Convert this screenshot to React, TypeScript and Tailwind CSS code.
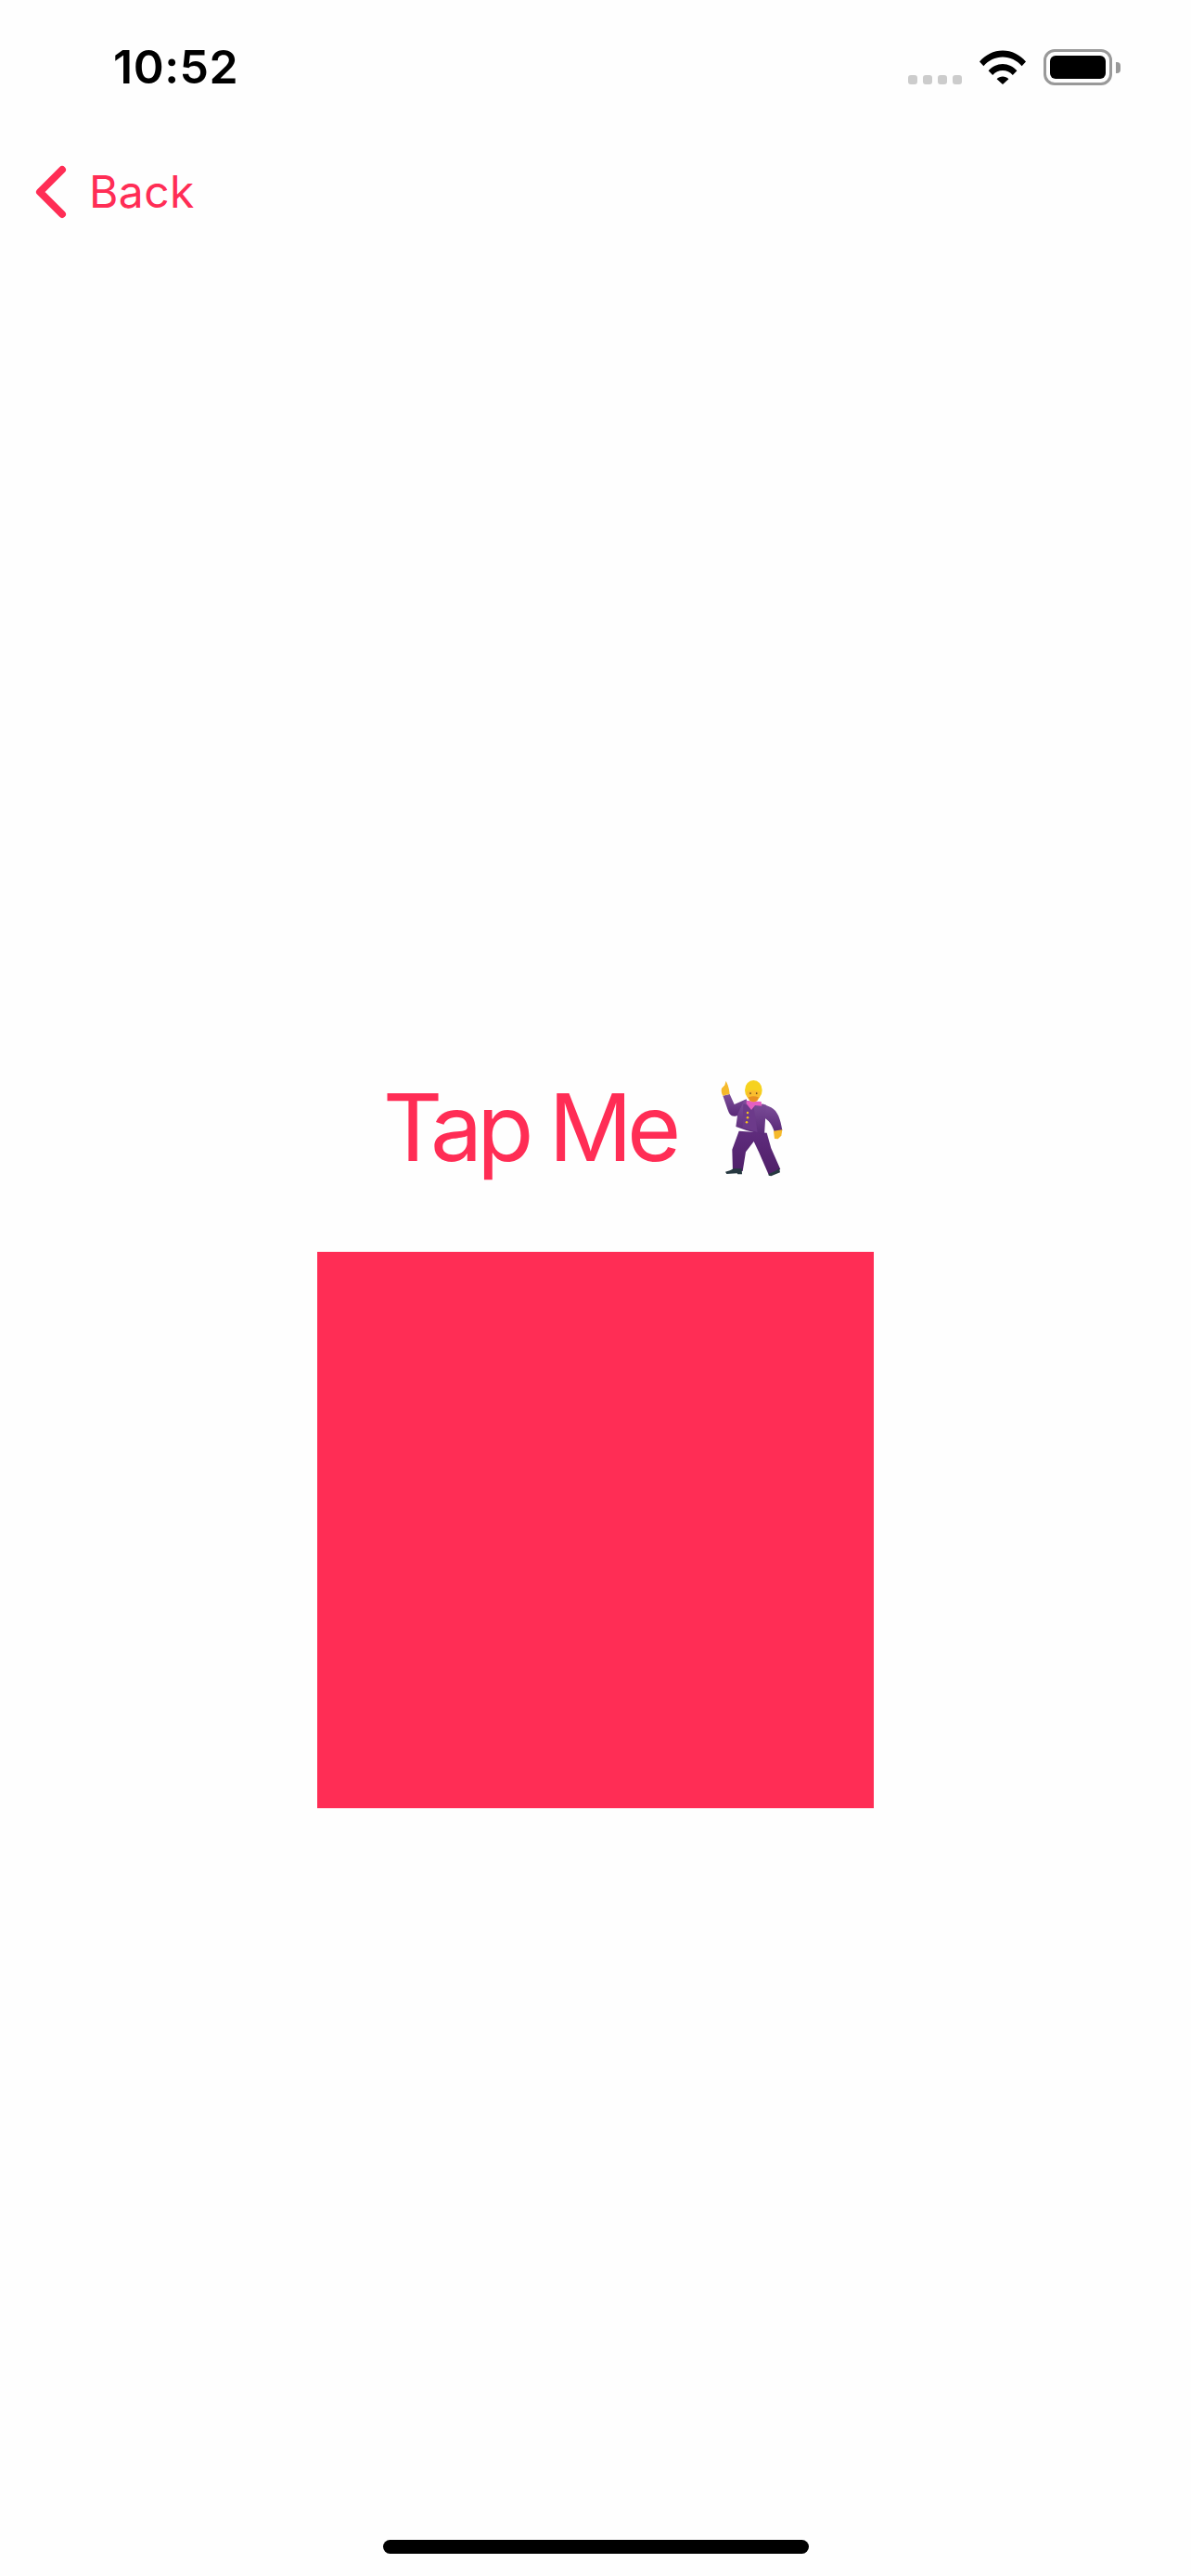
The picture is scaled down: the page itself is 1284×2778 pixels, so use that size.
function Wifi() {
  return (
    <svg width="50" height="37" viewBox="0 0 50 37" className="mb-[1px]">
      <path d="M0 12.5C6.5 5.2 15.2 0.6 25 0.6S43.5 5.2 50 12.5L45.6 17.2C40.2 11.3 33 7.6 25 7.6S9.8 11.3 4.4 17.2Z" />
      <path d="M9.6 22.2C13.5 17.9 19 15 25 15S36.5 17.9 40.4 22.2L35.8 27C33 24 29.2 22.1 25 22.1S17 24 14.2 27Z" />
      <path d="M18.6 31.2C20.3 29.6 22.5 28.6 25 28.6S29.7 29.6 31.4 31.2L25 37Z" />
    </svg>
  );
}

function Battery() {
  return (
    <div className="flex items-center">
      <div className="h-[39px] w-[74px] rounded-[12px] border-[3px] border-[#999999] p-[4px]">
        <div className="h-full w-full rounded-[6px] bg-black" />
      </div>
      <div className="ml-[4px] h-[12px] w-[5px] rounded-r-[4px] bg-[#999999]" />
    </div>
  );
}

function Dancer() {
  return (
    <svg width="70" height="106" viewBox="45 36 210 318" className="shrink-0">
      <defs>
        <linearGradient id="suit" x1="0" y1="0" x2="0" y2="1">
          <stop offset="0" stopColor="#7d4f9a" />
          <stop offset="1" stopColor="#5a2a78" />
        </linearGradient>
        <linearGradient id="trousers" x1="0" y1="0" x2="0" y2="1">
          <stop offset="0" stopColor="#5f2c7d" />
          <stop offset="1" stopColor="#4f1f68" />
        </linearGradient>
      </defs>
      {/* legs */}
      <path d="M110 206L200 212L214 262L244 330L206 347L174 274L158 240L132 274L122 336L90 338L88 266Z" fill="url(#trousers)" />
      {/* shoes */}
      <path d="M66 338C76 336 86 332 92 328L119 328L120 346L106 346L104 343L70 345Z" fill="#263840" />
      <path d="M206 344C218 340 232 334 240 326L243 340L214 352L206 350Z" fill="#263840" />
      {/* raised arm */}
      <path d="M58 92L80 87L95 120L134 103L142 146L98 158C84 160 78 150 74 138Z" fill="url(#suit)" />
      {/* other arm */}
      <path d="M186 118L214 130C236 142 244 168 250 204L224 208C218 188 208 170 184 160Z" fill="url(#suit)" />
      {/* jacket */}
      <path d="M128 106L198 122L192 220L166 212L134 204L100 192L106 150Z" fill="url(#suit)" />
      <path d="M124 118L158 130L170 210L122 196Z" fill="#6c3a8a" />
      {/* shirt and collar */}
      <path d="M134 108L182 111L184 125L162 123L150 138L134 118Z" fill="#e45fc2" />
      {/* buttons */}
      <circle cx="138" cy="147" r="3.8" fill="#f4c21c" />
      <circle cx="138" cy="163" r="3.8" fill="#f4c21c" />
      <circle cx="135" cy="178" r="3.8" fill="#f4c21c" />
      {/* raised hand */}
      <path d="M54 68L64 58L68 44L74 58L78 72L80 86L58 92C53 84 52 74 54 68Z" fill="#f5b92b" />
      {/* lower hand */}
      <path d="M222 206L250 202L247 221L236 232L225 231Z" fill="#f5b92b" />
      {/* hair */}
      <ellipse cx="157" cy="74" rx="28" ry="32" fill="#f6d21f" />
      {/* face */}
      <path d="M135 78Q157 70 179 78L177 96Q170 112 157 112Q144 112 137 96Z" fill="#f9bd2e" />
      <path d="M141 97Q157 91 173 97L169 108Q157 115 145 108Z" fill="#e88f22" />
      <circle cx="147" cy="84" r="2.6" fill="#4a2f1c" />
      <circle cx="167" cy="84" r="2.6" fill="#4a2f1c" />
    </svg>
  );
}

export default function App() {
  return (
    <div className="flex h-[2778px] w-full flex-col bg-[#fefefe] font-['Inter',sans-serif]">
      <header className="flex shrink-0 flex-col">
        <div className="flex h-[92px] items-end justify-between pl-[122px] pr-[76px]">
          <span className="mb-[-3px] text-[50px] leading-[46px] font-semibold tracking-[0.5px] text-black">10:52</span>
          <div className="flex items-end gap-[19px]">
            <div className="mb-[1px] flex gap-[6px]">
              <span className="size-[10px] rounded-[3px] bg-[#cccccc]" />
              <span className="size-[10px] rounded-[3px] bg-[#cccccc]" />
              <span className="size-[10px] rounded-[3px] bg-[#cccccc]" />
              <span className="size-[10px] rounded-[3px] bg-[#cccccc]" />
            </div>
            <Wifi />
            <Battery />
          </div>
        </div>
        <nav className="mt-[85px] flex items-center pl-[37px] text-[#ff2d55]">
          <svg width="36" height="60" viewBox="0 0 36 60" fill="none" stroke="#ff2d55" strokeWidth="8" strokeLinecap="round" strokeLinejoin="round" className="shrink-0">
            <path d="M30 6L6 30L30 54" />
          </svg>
          <span className="ml-[23px] text-[48px] leading-[60px] tracking-[0.4px]">Back</span>
        </nav>
      </header>

      <main className="mt-[926px] flex flex-1 flex-col items-center">
        <div className="flex h-[106px] items-center gap-[47px] pr-[26px] text-[#ff2d55]">
          <span className="text-[100px] leading-[106px] tracking-[-6px]">Tap Me</span>
          <Dancer />
        </div>
        <div className="mt-[81px] size-[600px] bg-[#ff2d55]" />
      </main>

      <div className="mb-[24px] h-[15px] w-[459px] self-center rounded-full bg-black" />
    </div>
  );
}
